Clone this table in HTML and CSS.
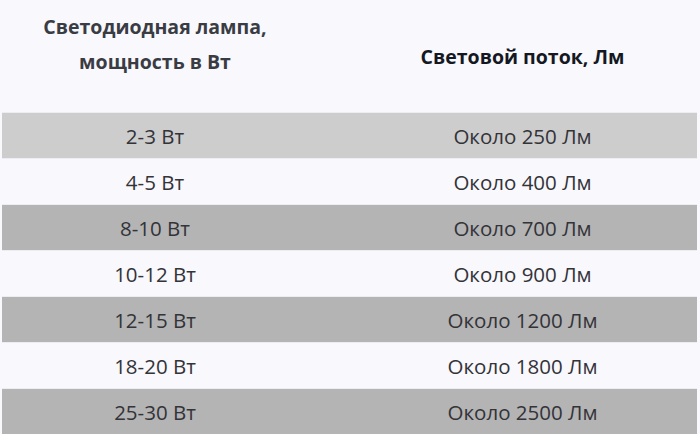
FILE: index.html
```html
<!DOCTYPE html>
<html lang="ru">
<head>
<meta charset="utf-8">
<link rel="stylesheet" href="styles.css">
</head>
<body>
<div class="table">
  <div class="row head">
    <div class="cell left top">Светодиодная лампа,<br>мощность в Вт</div>
    <div class="cell right">Световой поток, Лм</div>
  </div>
  <div class="row light">
    <div class="cell left">2-3 Вт</div>
    <div class="cell right">Около 250 Лм</div>
  </div>
  <div class="row white">
    <div class="cell left">4-5 Вт</div>
    <div class="cell right">Около 400 Лм</div>
  </div>
  <div class="row gray">
    <div class="cell left">8-10 Вт</div>
    <div class="cell right">Около 700 Лм</div>
  </div>
  <div class="row white">
    <div class="cell left">10-12 Вт</div>
    <div class="cell right">Около 900 Лм</div>
  </div>
  <div class="row gray">
    <div class="cell left">12-15 Вт</div>
    <div class="cell right">Около 1200 Лм</div>
  </div>
  <div class="row white">
    <div class="cell left">18-20 Вт</div>
    <div class="cell right">Около 1800 Лм</div>
  </div>
  <div class="row gray">
    <div class="cell left">25-30 Вт</div>
    <div class="cell right">Около 2500 Лм</div>
  </div>
</div>
</body>
</html>
```

FILE: styles.css
```css
html, body {
  margin: 0;
  padding: 0;
  background: #f8f8fd;
}
body {
  width: 700px;
  height: 434px;
  overflow: hidden;
  font-family: "Open Sans", "Noto Sans", sans-serif;
  color: #333338;
}
.table {
  display: flex;
  flex-direction: column;
  padding: 0 3px 0 2px;
}
.row {
  display: grid;
  grid-template-columns: 306px 1fr;
  height: 46px;
  box-sizing: border-box;
  border-top: 1px solid #ececf2;
  align-items: center;
  font-size: 20.5px;
}
.row .cell {
  text-align: center;
}
.row .right {
  padding-left: 40px;
}
.head {
  height: 112px;
  border-top: none;
  font-weight: 700;
  font-size: 19.5px;
  color: #2a2d36;
}
.head .left {
  align-self: start;
  padding-top: 9px;
  line-height: 35px;
  color: #3a3c44;
}
.head .right {
  color: #151822;
}
.light { background: #cdcdcd; }
.gray { background: #b4b4b4; }
.white { background: #f8f8fd; }
```
